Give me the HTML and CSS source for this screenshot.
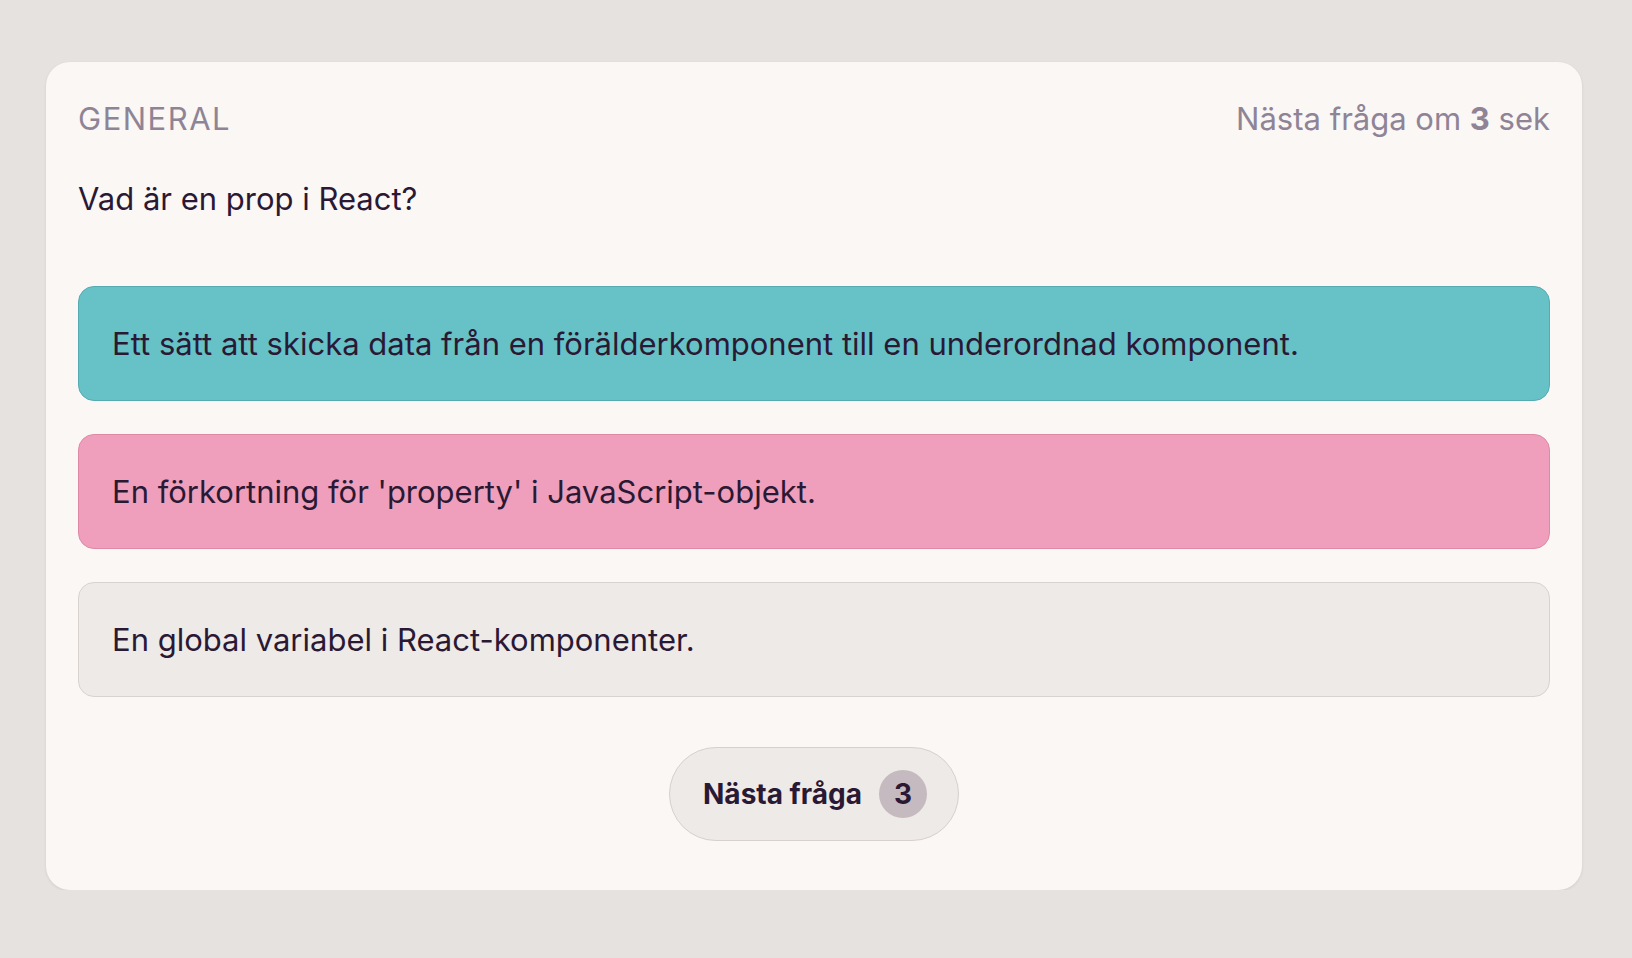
FILE: index.html
```html
<!DOCTYPE html>
<html lang="sv">
<head>
<meta charset="utf-8">
<title>Quiz</title>
<link rel="stylesheet" href="styles.css">
</head>
<body>
<main class="page">
  <section class="card">
    <header class="card-header">
      <span class="category">GENERAL</span>
      <span class="timer">Nästa fråga om <strong>3</strong> sek</span>
    </header>
    <p class="question">Vad är en prop i React?</p>
    <ul class="options">
      <li class="option option-correct">Ett sätt att skicka data från en förälderkomponent till en underordnad komponent.</li>
      <li class="option option-wrong">En förkortning för 'property' i JavaScript-objekt.</li>
      <li class="option">En global variabel i React-komponenter.</li>
    </ul>
    <div class="actions">
      <button class="next-btn" type="button">Nästa fråga <span class="badge">3</span></button>
    </div>
  </section>
</main>
</body>
</html>
```
FILE: styles.css
```css
html, body {
  margin: 0;
  padding: 0;
}
body {
  background: #e6e2df;
  font-family: Inter, "Noto Sans", sans-serif;
  color: #2a1935;
}
.page {
  padding: 62px 50px 0 46px;
}
.card {
  width: 1536px;
  box-sizing: border-box;
  background: #faf7f5;
  border-radius: 24px;
  padding: 32px 32px 49px;
  box-shadow: 0 1px 3px rgba(60, 40, 50, 0.10);
}
.card-header {
  display: flex;
  justify-content: space-between;
  align-items: baseline;
  font-size: 31px;
  line-height: 50px;
  color: #8f8496;
}
.category {
  letter-spacing: 1.5px;
}
.timer strong {
  font-weight: 700;
}
.question {
  margin: 35px 0 0;
  font-size: 31px;
  line-height: 40px;
}
.options {
  list-style: none;
  margin: 67px 0 0;
  padding: 0;
  display: flex;
  flex-direction: column;
  gap: 33px;
}
.option {
  box-sizing: border-box;
  height: 115px;
  display: flex;
  align-items: center;
  padding: 0 33px;
  border: 1.5px solid #d9d3d0;
  border-radius: 16px;
  background: #eeeae7;
  font-size: 31px;
}
.option-correct {
  background: #66c2c6;
  border-color: #56abb3;
}
.option-wrong {
  background: #ef9fbb;
  border-color: #de8aa7;
}
.actions {
  display: flex;
  justify-content: center;
  margin-top: 50px;
}
.next-btn {
  display: flex;
  align-items: center;
  gap: 17px;
  height: 94px;
  box-sizing: border-box;
  padding: 0 31px 0 33px;
  border: 1.5px solid #d7d0ce;
  border-radius: 47px;
  background: #eeeae7;
  font-family: inherit;
  font-size: 28px;
  font-weight: 700;
  color: #2a1935;
}
.badge {
  width: 48px;
  height: 48px;
  border-radius: 50%;
  background: #c5babf;
  display: flex;
  align-items: center;
  justify-content: center;
  font-size: 28px;
  font-weight: 700;
}
```
